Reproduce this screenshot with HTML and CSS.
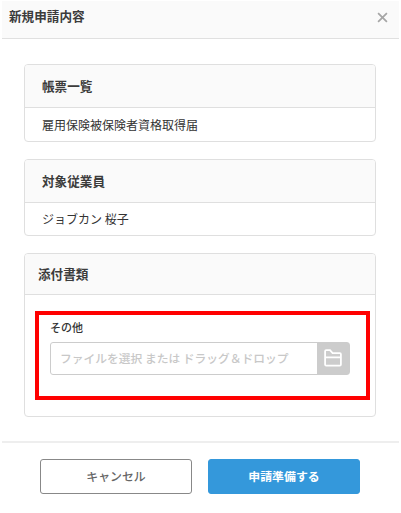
FILE: index.html
```html
<!DOCTYPE html>
<html lang="ja">
<head>
<meta charset="utf-8">
<title>新規申請内容</title>
<link rel="stylesheet" href="styles.css">
</head>
<body>
<div class="modal">
  <header class="modal-header">
    <h1 class="modal-title">新規申請内容</h1>
    <svg class="close" viewBox="0 0 10 10" role="img"><path d="M1 1L9 9M9 1L1 9"/></svg>
  </header>
  <main class="modal-body">
    <section class="card card-forms">
      <h2 class="card-title">帳票一覧</h2>
      <p class="card-text">雇用保険被保険者資格取得届</p>
    </section>
    <section class="card card-employee">
      <h2 class="card-title">対象従業員</h2>
      <p class="card-text">ジョブカン 桜子</p>
    </section>
    <section class="card card-files">
      <h2 class="card-title">添付書類</h2>
      <div class="highlight">
        <div class="label">その他</div>
        <div class="file-input">
          <span class="placeholder">ファイルを選択 または ドラッグ＆ドロップ</span>
          <span class="folder">
            <svg viewBox="0 0 18 18"><path d="M1.1 15.4V2.2Q1.1 1.1 2.2 1.1H6L8.6 4.2H15.9Q16.9 4.2 16.9 5.2V15.4Q16.9 16.6 15.8 16.6H2.2Q1.1 16.6 1.1 15.4ZM1.1 8.4H16.9"/></svg>
          </span>
        </div>
      </div>
    </section>
  </main>
  <footer class="modal-footer">
    <button class="btn btn-cancel">キャンセル</button>
    <button class="btn btn-submit">申請準備する</button>
  </footer>
</div>
</body>
</html>
```
FILE: styles.css
```css
* { box-sizing: border-box; }
body {
  margin: 0;
  background: #fff;
  color: #333;
  font-family: "Noto Sans CJK JP", sans-serif;
  font-size: 12px;
  line-height: 18px;
}
h1, h2, p { margin: 0; }
.modal {
  width: 397px;
  height: 513px;
  margin-left: 2px;
  padding-top: 1px;
}
.modal-header {
  display: flex;
  justify-content: space-between;
  height: 38px;
  padding: 6px 11px 0 7px;
  background: #fafafa;
  border-bottom: 1px solid #e0e0e0;
}
.modal-title, .card-title {
  color: #3c3c3c;
  font-size: 12.6px;
  font-weight: 700;
}
.close {
  width: 11px;
  height: 11px;
  margin-top: 5px;
  fill: none;
  stroke: #a6a6a6;
  stroke-width: 1.6;
}
.modal-body {
  display: flex;
  flex-direction: column;
  gap: 17px;
  height: 402px;
  padding: 25px 23px 0 22px;
}
.card {
  border: 1px solid #dfdfdf;
  border-radius: 4px;
  overflow: hidden;
  flex: none;
}
.card-title {
  display: flex;
  align-items: center;
  height: 43px;
  padding: 0 0 1px 17px;
  background: #fafafa;
  border-bottom: 1px solid #dfdfdf;
}
.card-text { padding: 8px 17px 0; }
.card-forms { height: 78px; }
.card-employee { height: 77px; }
.card-employee .card-text { padding-top: 7px; }
.card-files { height: 164px; }
.card-files .card-title { height: 41px; padding-left: 13px; }
.highlight {
  width: 335px;
  height: 89px;
  margin: 16px 0 0 10px;
  padding: 3px 0 0 11px;
  border: 4px solid #f00;
}
.label {
  font-size: 11px;
  font-weight: 500;
}
.file-input {
  display: flex;
  width: 300px;
  height: 33px;
  margin-top: 6px;
  border: 1px solid #ccc;
  border-radius: 3px;
}
.placeholder {
  flex: 1;
  padding-left: 9px;
  color: #c8c8c8;
  font-size: 11.75px;
  font-weight: 500;
  line-height: 29px;
  white-space: nowrap;
}
.folder {
  display: flex;
  align-items: center;
  justify-content: center;
  width: 32px;
  background: #ccc;
}
.folder svg {
  width: 18px;
  height: 18px;
  margin-top: -1px;
  fill: none;
  stroke: #fff;
  stroke-width: 1.8;
}
.modal-footer {
  display: flex;
  gap: 16px;
  padding: 16px 0 0 38px;
  border-top: 2px solid #eee;
}
.btn {
  width: 152px;
  height: 35px;
  padding: 0 0 1px;
  border: 1px solid #888;
  border-radius: 3px;
  background: #fff;
  color: #666;
  font: 500 11.9px/18px "Noto Sans CJK JP", sans-serif;
}
.btn-submit {
  border-color: #3498db;
  background: #3498db;
  color: #fff;
  font-weight: 700;
}
```
